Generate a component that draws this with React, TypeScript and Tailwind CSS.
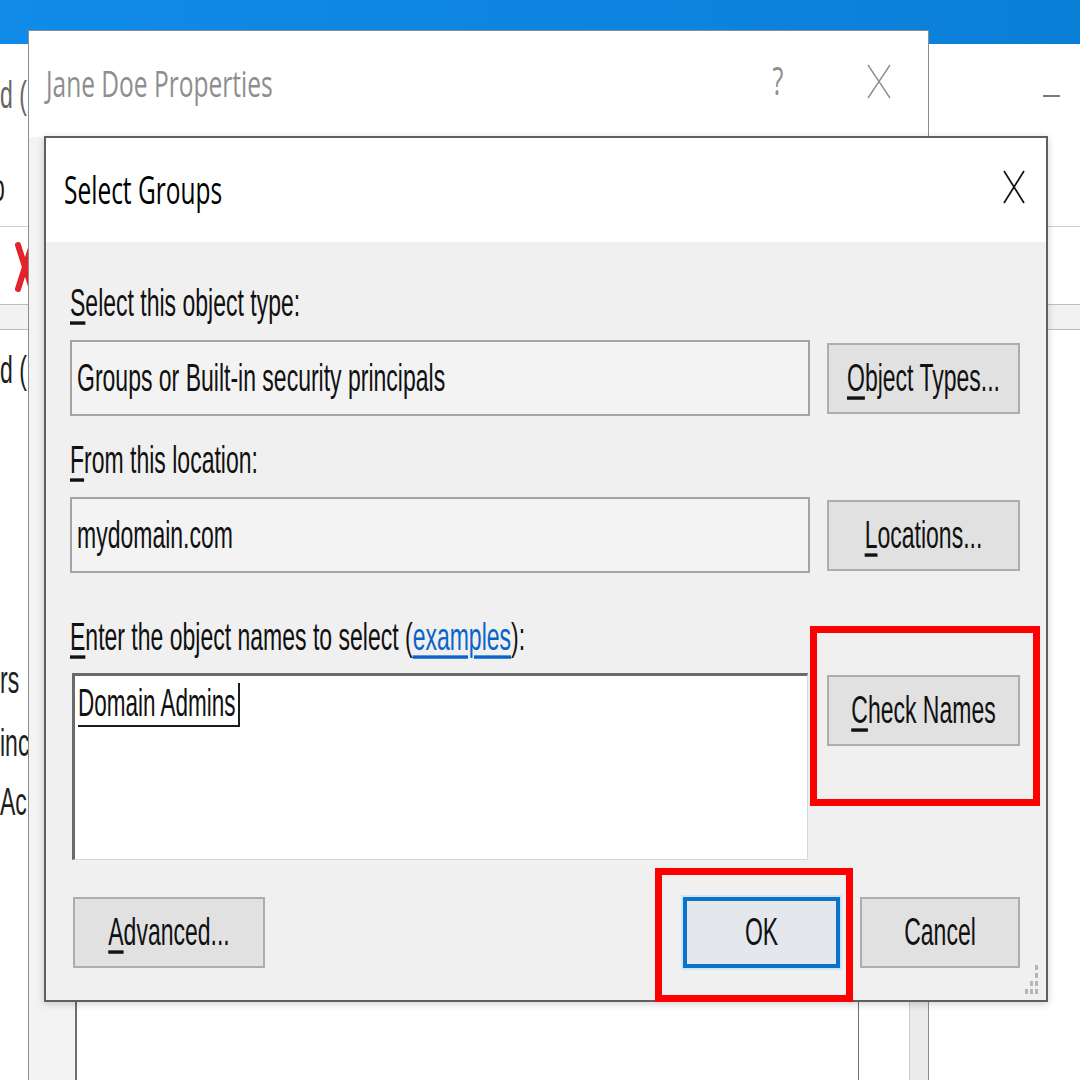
import type { ReactNode } from "react"

const sans = "font-['Liberation_Sans',Arial,sans-serif]"
const seg = "font-['Open_Sans','Noto_Sans',sans-serif]"

// text in the screenshot is stretched vertically, so every run of text gets a y-scale
function T({ children, className = "" }: { children: ReactNode; className?: string }) {
  return <span className={`inline-block leading-none scale-y-[1.7] whitespace-nowrap ${className}`}>{children}</span>
}

function U({ children }: { children: ReactNode }) {
  return <span className="underline decoration-[1.5px] underline-offset-[3px]">{children}</span>
}

function Btn({ children, className = "" }: { children: ReactNode; className?: string }) {
  return (
    <button
      type="button"
      className={`flex items-center justify-center h-[71px] shrink-0 bg-[#e1e1e1] border-2 border-[#adadad] text-[23px] text-[#111] ${sans} ${className}`}
    >
      {children}
    </button>
  )
}

function Label({ children }: { children: ReactNode }) {
  return (
    <div className={`h-[40px] flex items-center text-[23px] text-[#111] ${sans}`}>
      <T>{children}</T>
    </div>
  )
}

function ReadBox({ text }: { text: string }) {
  return (
    <div className={`w-[740px] h-[76px] flex items-center pl-[5px] bg-[#f3f3f3] border-2 border-[#a4a4a4] text-[23px] text-[#111] ${sans}`}>
      <T>{text}</T>
    </div>
  )
}

function SelectGroups() {
  return (
    <div className="absolute left-[44px] top-[136px] w-[1004px] h-[866px] flex flex-col bg-[#f0f0f0] border-2 border-[#5f5f5f] shadow-[0_2px_8px_rgba(0,0,0,0.18)]">
      <div className="h-[104px] shrink-0 bg-white flex items-center justify-between pl-[18px] pr-[21px]">
        <span className={`inline-block leading-none scale-y-[1.55] text-[24.5px] text-black ${seg}`}>Select Groups</span>
        <svg width="22" height="34" viewBox="0 0 22 34" className="-mt-[6px]">
          <path d="M1 1 L21 33 M21 1 L1 33" stroke="#111" strokeWidth="1.7" fill="none" />
        </svg>
      </div>

      <div className="flex-1 flex flex-col pl-[24px] pr-[26px] pt-[41px]">
        <Label>
          <U>S</U>elect this object type:
        </Label>
        <div className="mt-[17px] h-[76px] flex items-center gap-[17px]">
          <ReadBox text="Groups or Built-in security principals" />
          <Btn className="w-[193px]">
            <T>
              <U>O</U>bject Types...
            </T>
          </Btn>
        </div>

        <div className="mt-[24px]">
          <Label>
            <U>F</U>rom this location:
          </Label>
        </div>
        <div className="mt-[17px] h-[76px] flex items-center gap-[17px]">
          <ReadBox text="mydomain.com" />
          <Btn className="w-[193px]">
            <T>
              <U>L</U>ocations...
            </T>
          </Btn>
        </div>

        <div className="mt-[44px]">
          <Label>
            <U>E</U>nter the object names to select (
            <span className="text-[#0a64c8] underline decoration-[1.5px] underline-offset-[3px]">examples</span>):
          </Label>
        </div>
        <div className="mt-[16px] h-[187px] flex items-start gap-[19px]">
          <div className="ml-[2px] w-[736px] h-[187px] bg-white border-t-[3px] border-l-[3px] border-r border-b border-t-[#6a6a6a] border-l-[#6a6a6a] border-r-[#d8d8d8] border-b-[#d8d8d8] pl-[3px] pt-[7px]">
            <div className={`inline-flex items-center h-[44px] pr-[2px] border-b-2 border-r-2 border-[#1c1c1c] text-[22.5px] text-[#111] ${sans}`}>
              <T>Domain Admins</T>
            </div>
          </div>
          <Btn className="w-[193px] mt-[2px]">
            <T>
              <U>C</U>heck Names
            </T>
          </Btn>
        </div>

        <div className="mt-[37px] flex items-center">
          <Btn className="w-[192px] ml-[3px]">
            <T>
              <U>A</U>dvanced...
            </T>
          </Btn>
          <div className="flex-1" />
          <Btn className="w-[157px] !border-4 !border-[#0b74c8] !bg-[#e4e8ec] shadow-[0_0_0_2px_#cfe6f9]">
            <T>OK</T>
          </Btn>
          <Btn className="w-[160px] ml-[20px]">
            <T>Cancel</T>
          </Btn>
        </div>
      </div>

      <svg width="16" height="30" viewBox="0 0 16 30" className="absolute right-[6px] bottom-[5px]">
        {[
          [11, 0],
          [11, 8],
          [6, 16],
          [11, 16],
          [1, 24],
          [6, 24],
          [11, 24],
        ].map(([x, y]) => (
          <rect key={`${x}-${y}`} x={x} y={y} width="3" height="5" fill="#b5b5b5" />
        ))}
      </svg>
    </div>
  )
}

function Properties() {
  return (
    <div className="absolute left-[28px] top-[30px] w-[901px] h-[1050px] flex flex-col bg-[#f3f3f3] border-l border-t border-r border-[#8c8c8c]">
      <div className="h-[106px] shrink-0 bg-white flex items-center pl-[17px]">
        <span className={`inline-block leading-none scale-y-[1.5] text-[24.5px] text-[#8e8e8e] ${seg}`}>Jane Doe Properties</span>
        <div className="flex-1" />
        <div className={`w-[40px] flex justify-center -mt-[8px] text-[25px] text-[#8e8e8e] ${seg}`}>
          <span className="inline-block leading-none scale-y-[1.5]">?</span>
        </div>
        <div className="w-[40px] ml-[61px] mr-[29px] flex justify-center -mt-[6px]">
          <svg width="24" height="35" viewBox="0 0 24 35">
            <path d="M1 1 L23 34 M23 1 L1 34" stroke="#8e8e8e" strokeWidth="1.4" fill="none" />
          </svg>
        </div>
      </div>
      <div className="flex-1 flex">
        <div className="w-[46px] shrink-0" />
        <div className="w-[784px] mt-[560px] bg-white border-l-2 border-r border-[#6f6f6f]" />
        <div className="w-[50px] mt-[560px] bg-white" />
        <div className="w-[19px] mt-[560px] bg-[#ebebeb] border-l border-[#c9c9c9]" />
      </div>
    </div>
  )
}

export default function App() {
  return (
    <div className="relative w-[1080px] h-[1080px] overflow-hidden bg-white">
      {/* window behind both dialogs */}
      <div className={`h-full flex flex-col text-[23px] text-[#1e1e1e] ${sans}`}>
        <div className="h-[44px] shrink-0 bg-gradient-to-r from-[#108be8] to-[#0a7fd8]" />

        <div className="h-[183px] shrink-0 flex border-b border-[#cfcfcf]">
          <div className="w-[28px] overflow-hidden">
            <div className="mt-[31px] h-[40px] flex items-center text-[#666]">
              <T>d (</T>
            </div>
            <div className="mt-[53px] h-[40px] flex items-center -ml-[8px]">
              <T>o</T>
            </div>
          </div>
          <div className="flex-1" />
          <div className="w-[17px] h-[2px] mt-[51px] bg-[#7a7a7a] mr-[20px]" />
        </div>

        <div className="h-[77px] shrink-0 relative">
          <svg width="20" height="50" viewBox="0 0 20 50" className="ml-[15px] mt-[15px]">
            <path d="M3 3 L17 47 M17 3 L3 47" stroke="#e2232c" strokeWidth="6" strokeLinecap="round" fill="none" />
          </svg>
        </div>

        <div className="h-[26px] shrink-0 bg-[#f2f2f2] border-t border-b border-[#bdbdbd]" />

        <div className="flex-1">
          <div className="w-[28px] overflow-hidden">
            <div className="mt-[20px] h-[40px] flex items-center">
              <T>d (</T>
            </div>
            <div className="mt-[270px] h-[40px] flex items-center">
              <T>rs</T>
            </div>
            <div className="mt-[23px] h-[40px] flex items-center">
              <T>inc</T>
            </div>
            <div className="mt-[19px] h-[40px] flex items-center">
              <T>Ac</T>
            </div>
          </div>
        </div>
      </div>

      <Properties />
      <SelectGroups />

      {/* red annotation frames */}
      <div className="absolute left-[810px] top-[626px] w-[230px] h-[180px] border-[7px] border-[#ff0000]" />
      <div className="absolute left-[655px] top-[868px] w-[198px] h-[134px] border-[7px] border-[#ff0000]" />
    </div>
  )
}
